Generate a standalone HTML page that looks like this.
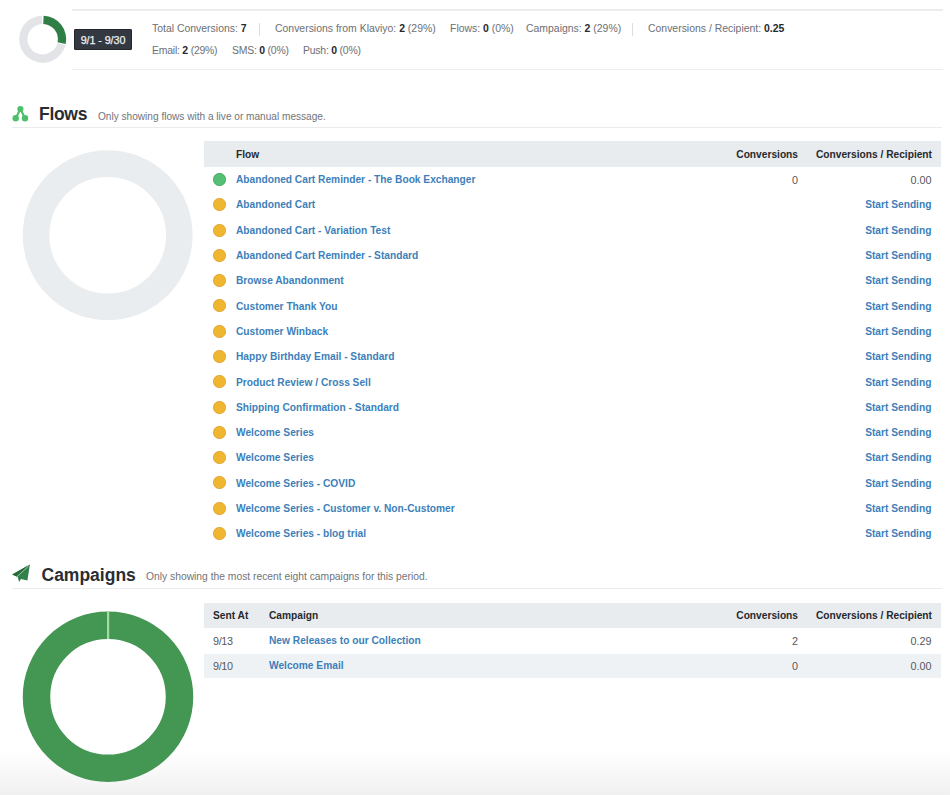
<!DOCTYPE html>
<html><head><meta charset="utf-8">
<style>
*{margin:0;padding:0;box-sizing:border-box}
html,body{width:950px;height:795px;overflow:hidden;background:#fff}
body{position:relative;font-family:"Liberation Sans",sans-serif;color:#6b6e73}
.abs{position:absolute}
.hline{position:absolute;height:1px;background:#e6e7e9}
.stat{position:absolute;font-size:10.45px;white-space:nowrap;line-height:12px;color:#6c6f74}
.stat b{color:#26292d;font-weight:bold}
.sep{position:absolute;width:1px;background:#dcdde0}
.badge{position:absolute;left:74px;top:29px;width:58px;height:21px;background:#343941;border:1px solid #24282e;border-radius:1px;color:#eef0f2;font-size:10.8px;line-height:21.5px;text-align:center;letter-spacing:-0.1px;-webkit-text-stroke:0.25px #eef0f2}
.title{position:absolute;font-size:17px;font-weight:bold;color:#2a2d32;white-space:nowrap;line-height:20px}
.sub{position:absolute;font-size:10.1px;color:#717479;white-space:nowrap;line-height:12px}
.thead{position:absolute;left:204px;width:737px;background:#e9ecef}
.th{position:absolute;font-size:10.2px;font-weight:bold;color:#26292d;white-space:nowrap;line-height:12px}
.row{position:absolute;left:204px;width:737px;height:25.3px}
.dot{position:absolute;left:213px;width:13px;height:13px;border-radius:50%}
.g{background:#55c073;box-shadow:inset 0 0 0 0.7px rgba(30,110,50,0.35)}
.y{background:#efb632;box-shadow:inset 0 0 0 0.7px rgba(190,130,20,0.35)}
.lnk{position:absolute;font-size:10.2px;font-weight:bold;color:#3d7fba;white-space:nowrap;line-height:12px}
.num{position:absolute;font-size:10.8px;color:#55585d;white-space:nowrap;line-height:12px;text-align:right}
.r1{right:152px}
.r2{right:18.6px}
.fade{position:absolute;left:0;top:750px;width:950px;height:45px;background:linear-gradient(to bottom,rgba(241,241,241,0) 0%,rgba(241,241,241,0.5) 50%,rgba(240,240,240,1) 100%)}
</style></head><body>

<!-- top summary -->
<svg class="abs" style="left:0;top:0" width="140" height="80" viewBox="0 0 140 80">
  <path d="M65.50 44.89 A23.5 23.5 0 1 1 42.08 15.71 L42.30 24.01 A15.2 15.2 0 1 0 57.45 42.88 Z" fill="#e2e4e7"/>
  <path id="topgreen" d="M43.60 15.72 A23.5 23.5 0 0 1 65.69 44.09 L57.57 42.36 A15.2 15.2 0 0 0 43.28 24.01 Z" fill="#2f7e45"/>
</svg>
<div class="badge">9/1 - 9/30</div>
<div class="hline" style="left:72px;top:9px;width:871px;height:1.8px;background:#ebeced"></div>
<div class="hline" style="left:72px;top:68.8px;width:871px;height:1.6px;background:#ebeced"></div>

<div class="stat" style="left:152px;top:23.3px">Total Conversions: <b>7</b></div>
<div class="sep" style="left:259px;top:22.6px;height:13px"></div>
<div class="stat" style="left:275px;top:23.3px">Conversions from Klaviyo: <b>2</b> (29%)</div>
<div class="stat" style="left:450px;top:23.3px">Flows: <b>0</b> (0%)</div>
<div class="stat" style="left:526px;top:23.3px">Campaigns: <b>2</b> (29%)</div>
<div class="sep" style="left:632px;top:22.6px;height:13px"></div>
<div class="stat" style="left:648px;top:23.3px">Conversions / Recipient: <b>0.25</b></div>
<div class="stat" style="left:152px;top:45px;letter-spacing:-0.22px">Email: <b>2</b> (29%)</div>
<div class="stat" style="left:232px;top:45px;letter-spacing:-0.22px">SMS: <b>0</b> (0%)</div>
<div class="stat" style="left:303px;top:45px;letter-spacing:-0.22px">Push: <b>0</b> (0%)</div>

<!-- Flows header -->
<svg class="abs" style="left:8px;top:100px" width="26" height="26" viewBox="8 100 26 26">
  <g stroke="#4fbf6c" stroke-width="2.1" fill="none"><path d="M20.4 109 L15.7 118.3 M20.4 109 L25.0 118.3"/></g>
  <g fill="#4fbf6c"><circle cx="20.4" cy="109.0" r="3.1"/><circle cx="15.7" cy="118.3" r="3.2"/><circle cx="25.0" cy="118.3" r="3.2"/></g>
</svg>
<div class="title" style="left:39px;top:104.2px;font-size:17.5px;letter-spacing:-0.3px">Flows</div>
<div class="sub" style="left:98px;top:111px">Only showing flows with a live or manual message.</div>
<div class="hline" style="left:12px;top:127px;width:930px;background:#ebebed"></div>

<!-- Flows donut -->
<svg class="abs" style="left:0;top:130px" width="220" height="220" viewBox="0 130 220 220">
  <circle cx="107.7" cy="235.2" r="71.65" fill="none" stroke="#eaedef" stroke-width="26.7"/>
</svg>

<!-- Flows table -->
<div class="thead" style="top:141px;height:26px"></div>
<div class="th" style="left:236px;top:148.7px">Flow</div>
<div class="th" style="right:152px;top:148.7px">Conversions</div>
<div class="th" style="right:18px;top:148.7px">Conversions / Recipient</div>
<div id="flowrows">
<div class="dot g" style="top:173.00px"></div>
<div class="lnk" style="left:236px;top:174.20px">Abandoned Cart Reminder - The Book Exchanger</div>
<div class="num r1" style="top:173.70px">0</div>
<div class="num r2" style="top:173.70px">0.00</div>
<div class="dot y" style="top:198.29px"></div>
<div class="lnk" style="left:236px;top:199.49px">Abandoned Cart</div>
<div class="lnk r2" style="top:199.49px">Start Sending</div>
<div class="dot y" style="top:223.58px"></div>
<div class="lnk" style="left:236px;top:224.78px">Abandoned Cart - Variation Test</div>
<div class="lnk r2" style="top:224.78px">Start Sending</div>
<div class="dot y" style="top:248.87px"></div>
<div class="lnk" style="left:236px;top:250.07px">Abandoned Cart Reminder - Standard</div>
<div class="lnk r2" style="top:250.07px">Start Sending</div>
<div class="dot y" style="top:274.16px"></div>
<div class="lnk" style="left:236px;top:275.36px">Browse Abandonment</div>
<div class="lnk r2" style="top:275.36px">Start Sending</div>
<div class="dot y" style="top:299.45px"></div>
<div class="lnk" style="left:236px;top:300.65px">Customer Thank You</div>
<div class="lnk r2" style="top:300.65px">Start Sending</div>
<div class="dot y" style="top:324.74px"></div>
<div class="lnk" style="left:236px;top:325.94px">Customer Winback</div>
<div class="lnk r2" style="top:325.94px">Start Sending</div>
<div class="dot y" style="top:350.03px"></div>
<div class="lnk" style="left:236px;top:351.23px">Happy Birthday Email - Standard</div>
<div class="lnk r2" style="top:351.23px">Start Sending</div>
<div class="dot y" style="top:375.32px"></div>
<div class="lnk" style="left:236px;top:376.52px">Product Review / Cross Sell</div>
<div class="lnk r2" style="top:376.52px">Start Sending</div>
<div class="dot y" style="top:400.61px"></div>
<div class="lnk" style="left:236px;top:401.81px">Shipping Confirmation - Standard</div>
<div class="lnk r2" style="top:401.81px">Start Sending</div>
<div class="dot y" style="top:425.90px"></div>
<div class="lnk" style="left:236px;top:427.10px">Welcome Series</div>
<div class="lnk r2" style="top:427.10px">Start Sending</div>
<div class="dot y" style="top:451.19px"></div>
<div class="lnk" style="left:236px;top:452.39px">Welcome Series</div>
<div class="lnk r2" style="top:452.39px">Start Sending</div>
<div class="dot y" style="top:476.48px"></div>
<div class="lnk" style="left:236px;top:477.68px">Welcome Series - COVID</div>
<div class="lnk r2" style="top:477.68px">Start Sending</div>
<div class="dot y" style="top:501.77px"></div>
<div class="lnk" style="left:236px;top:502.97px">Welcome Series - Customer v. Non-Customer</div>
<div class="lnk r2" style="top:502.97px">Start Sending</div>
<div class="dot y" style="top:527.06px"></div>
<div class="lnk" style="left:236px;top:528.26px">Welcome Series - blog trial</div>
<div class="lnk r2" style="top:528.26px">Start Sending</div>
</div>

<!-- Campaigns header -->
<svg class="abs" style="left:8px;top:560px" width="28" height="28" viewBox="8 560 28 28">
  <path d="M29.9 564.5 L12.2 574.4 L16.6 576.4 L17.6 577.0 L19.2 581.9 L21.0 579.1 L27.4 580.5 Z" fill="#33814a"/>
  <path d="M29.9 564.5 L12.2 574.4 L16.7 576.4 Z" fill="#2a6b3c"/>
  <path d="M28.8 565.8 L16.9 576.8" stroke="#c2e6c4" stroke-width="0.75" fill="none"/>
</svg>
<div class="title" style="left:41.5px;top:565px;font-size:17.5px;letter-spacing:0px">Campaigns</div>
<div class="sub" style="left:146px;top:571px;font-size:10.3px">Only showing the most recent eight campaigns for this period.</div>
<div class="hline" style="left:12px;top:588px;width:930px;background:#ebebed"></div>

<!-- Campaigns donut -->
<svg class="abs" style="left:0;top:590px;z-index:2" width="220" height="205" viewBox="0 590 220 205">
  <circle cx="108" cy="696.8" r="71.5" fill="none" stroke="#449753" stroke-width="27.5"/>
  <rect x="107" y="611.5" width="2.2" height="27.5" fill="#a3dca6"/>
</svg>

<!-- Campaigns table -->
<div class="thead" style="top:603px;height:25px"></div>
<div class="th" style="left:213px;top:610px">Sent At</div>
<div class="th" style="left:269px;top:610px">Campaign</div>
<div class="th" style="right:152px;top:610px">Conversions</div>
<div class="th" style="right:18px;top:610px">Conversions / Recipient</div>

<div class="num" style="left:213px;top:635.3px;letter-spacing:-0.35px">9/13</div>
<div class="lnk" style="left:269px;top:635.3px">New Releases to our Collection</div>
<div class="num r1" style="top:635.3px">2</div>
<div class="num r2" style="top:635.3px">0.29</div>

<div class="thead" style="top:654px;height:24px;background:#eff2f4"></div>
<div class="num" style="left:213px;top:660.3px;letter-spacing:-0.35px">9/10</div>
<div class="lnk" style="left:269px;top:660.3px">Welcome Email</div>
<div class="num r1" style="top:660.3px">0</div>
<div class="num r2" style="top:660.3px">0.00</div>

<div class="fade"></div>
</body></html>
